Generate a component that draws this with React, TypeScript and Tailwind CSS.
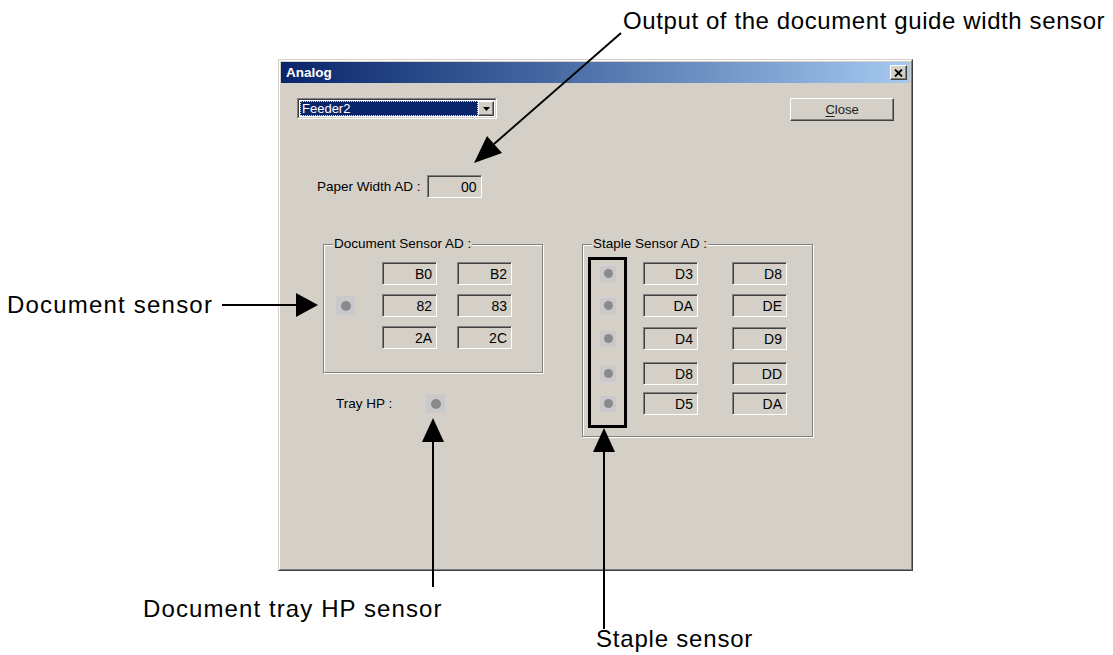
import React from "react";

function ValueBox({ v }: { v: string }) {
  return (
    <div className="w-[55px] h-[23px] border border-t-[#808080] border-l-[#808080] border-b-white border-r-white shadow-[inset_1px_1px_0_#404040] bg-[#d4d0c8] flex items-center justify-end pr-[4px] text-[14px] leading-none text-black">
      {v}
    </div>
  );
}

function LedBig() {
  return (
    <div className="w-[19px] h-[19px] bg-[#c9c9cc] flex items-center justify-center">
      <div className="w-[10px] h-[10px] rounded-full bg-[#8a8a8c]" />
    </div>
  );
}

function LedSmall() {
  return (
    <div className="w-[16px] h-[16px] bg-[#c9c9cc] flex items-center justify-center">
      <div className="w-[9px] h-[9px] rounded-full bg-[#8a8a8c]" />
    </div>
  );
}

function Group({
  label,
  className,
  children,
}: {
  label: string;
  className: string;
  children: React.ReactNode;
}) {
  return (
    <div
      className={
        "relative border border-[#808080] shadow-[inset_1px_1px_0_#ffffff,1px_1px_0_#ffffff] " +
        className
      }
    >
      <span className="absolute left-[9px] -top-[9px] bg-[#d4d0c8] px-[1px] text-[13.5px] leading-[16px] text-black whitespace-nowrap">
        {label}
      </span>
      {children}
    </div>
  );
}

function Window() {
  const staple: [string, string, string][] = [
    ["D3", "D8", "mt-0"],
    ["DA", "DE", "mt-[9px]"],
    ["D4", "D9", "mt-[10px]"],
    ["D8", "DD", "mt-[12px]"],
    ["D5", "DA", "mt-[7px]"],
  ];
  return (
    <div className="w-[635px] h-[512px] border border-t-[#d4d0c8] border-l-[#d4d0c8] border-b-[#404040] border-r-[#404040] bg-[#d4d0c8]">
      <div className="h-full border border-t-white border-l-white border-b-[#808080] border-r-[#808080] p-[1px] flex flex-col">
        {/* title bar */}
        <div className="h-[21px] flex items-center justify-between bg-linear-to-r from-[#0a246a] to-[#a6caf0] pl-[5px] pr-[3px]">
          <span className="text-white font-bold text-[13.5px] leading-none">Analog</span>
          <div className="w-[17px] h-[15px] bg-[#d4d0c8] border border-t-white border-l-white border-b-[#404040] border-r-[#404040] shadow-[inset_-1px_-1px_0_#808080] flex items-center justify-center">
            <svg width="9" height="8" viewBox="0 0 9 8">
              <path d="M1 0.5 L8 7.5 M8 0.5 L1 7.5" stroke="#000" strokeWidth="1.8" />
            </svg>
          </div>
        </div>

        {/* client */}
        <div className="flex flex-col">
          {/* top row */}
          <div className="mt-[15px] h-[23px] flex justify-between items-start pl-[16px] pr-[16px]">
            <div className="w-[200px] h-[21px] border border-t-[#808080] border-l-[#808080] border-b-white border-r-white">
              <div className="h-full border border-t-[#404040] border-l-[#404040] border-b-[#d4d0c8] border-r-[#d4d0c8] bg-white flex p-[1px]">
                <div className="flex-1 bg-[#0a246a] border border-dotted border-[#e8e8a0] flex items-center pl-[1px]">
                  <span className="text-white text-[13px] leading-none">Feeder2</span>
                </div>
                <div className="w-[16px] h-full bg-[#d4d0c8] border border-t-white border-l-white border-b-[#404040] border-r-[#404040] shadow-[inset_-1px_-1px_0_#808080] flex items-center justify-center">
                  <svg width="7" height="4" viewBox="0 0 7 4">
                    <path d="M0 0 H7 L3.5 4 Z" fill="#000" />
                  </svg>
                </div>
              </div>
            </div>
            <div className="w-[104px] h-[23px] bg-[#d4d0c8] border border-t-white border-l-white border-b-[#404040] border-r-[#404040] shadow-[inset_-1px_-1px_0_#808080] flex items-center justify-center text-[13px] leading-none text-[#222]">
              <span>
                <span className="underline underline-offset-2">C</span>lose
              </span>
            </div>
          </div>

          {/* paper width */}
          <div className="mt-[54px] flex items-center pl-[36px]">
            <span className="text-[13.5px] leading-none text-black whitespace-nowrap">Paper Width AD :</span>
            <div className="ml-[6px]">
              <ValueBox v="00" />
            </div>
          </div>

          {/* groups */}
          <div className="mt-[46px] flex items-start pl-[42px]">
            <div className="flex flex-col">
              <Group label="Document Sensor AD :" className="w-[220px] h-[129px]">
                <div className="flex items-center pt-[17px] pl-[12px]">
                  <LedBig />
                  <div className="ml-[27px] grid grid-cols-[55px_55px] gap-x-[20px] gap-y-[9px]">
                    <ValueBox v="B0" />
                    <ValueBox v="B2" />
                    <ValueBox v="82" />
                    <ValueBox v="83" />
                    <ValueBox v="2A" />
                    <ValueBox v="2C" />
                  </div>
                </div>
              </Group>
              <div className="mt-[21px] flex items-center pl-[13px]">
                <span className="text-[13.5px] leading-none text-black w-[57px] whitespace-nowrap">Tray HP :</span>
                <div className="ml-[33px]">
                  <LedBig />
                </div>
              </div>
            </div>

            <Group label="Staple Sensor AD :" className="ml-[39px] w-[231px] h-[193px]">
              <div className="flex flex-col pt-[17px] pl-[17px]">
                {staple.map(([a, b, m], i) => (
                  <div key={i} className={"flex items-center " + m}>
                    <LedSmall />
                    <div className="ml-[27px]">
                      <ValueBox v={a} />
                    </div>
                    <div className="ml-[34px]">
                      <ValueBox v={b} />
                    </div>
                  </div>
                ))}
              </div>
            </Group>
          </div>
        </div>
      </div>
    </div>
  );
}

function Annotations() {
  return (
    <>
      <svg
        className="absolute left-0 top-0 pointer-events-none"
        width="1113"
        height="655"
        viewBox="0 0 1113 655"
      >
        {/* guide width arrow */}
        <line x1="621" y1="33" x2="494" y2="144" stroke="#000" strokeWidth="2" />
        <polygon points="474,163 487,136 502,153" fill="#000" />
        {/* document sensor arrow */}
        <line x1="222" y1="305" x2="298" y2="305" stroke="#000" strokeWidth="2" />
        <polygon points="296,293 318,305 296,317" fill="#000" />
        {/* tray HP arrow */}
        <line x1="433" y1="587" x2="433" y2="440" stroke="#000" strokeWidth="2" />
        <polygon points="422,442 433,418 444,442" fill="#000" />
        {/* staple arrow */}
        <line x1="604" y1="629" x2="604" y2="450" stroke="#000" strokeWidth="2" />
        <polygon points="593,452 604,428 615,452" fill="#000" />
      </svg>
      <div className="absolute left-[588px] top-[257px] w-[39px] h-[171px] border-[3px] border-black pointer-events-none" />
      <span className="absolute left-[623px] top-[9px] text-[24px] leading-[24px] tracking-[0.6px] text-black whitespace-nowrap">
        Output of the document guide width sensor
      </span>
      <span className="absolute left-[7px] top-[293px] text-[24px] leading-[24px] tracking-[1.2px] text-black whitespace-nowrap">
        Document sensor
      </span>
      <span className="absolute left-[143px] top-[597px] text-[24px] leading-[24px] tracking-[1.1px] text-black whitespace-nowrap">
        Document tray HP sensor
      </span>
      <span className="absolute left-[596px] top-[627px] text-[24px] leading-[24px] tracking-[0.8px] text-black whitespace-nowrap">
        Staple sensor
      </span>
    </>
  );
}

export default function App() {
  return (
    <div className="relative w-[1113px] h-[655px] bg-white overflow-hidden font-['Liberation_Sans',Arial,sans-serif]">
      <div className="pl-[278px] pt-[59px]">
        <Window />
      </div>
      <Annotations />
    </div>
  );
}
